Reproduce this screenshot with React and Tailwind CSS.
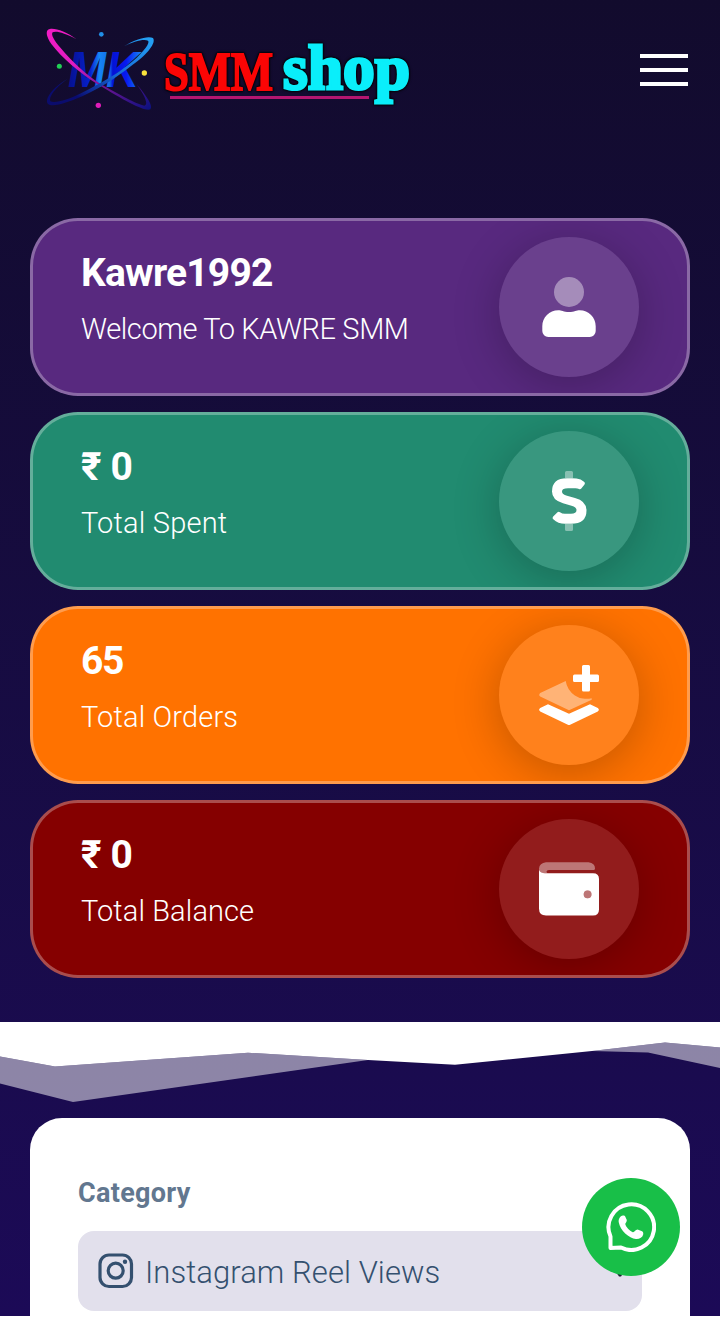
const UserIcon = () => (
  <svg viewBox="0 0 60 60" className="h-[60px] w-[60px]" fill="#fff">
    <circle cx="30" cy="15" r="15" opacity=".4" />
    <path d="M19.300 33.300c3.200 0 5.200 1.700 10.700 1.700s7.500-1.700 10.700-1.700c9 0 16 7 16 16V54a6 6 0 0 1-6 6H9.300a6 6 0 0 1-6-6v-4.700c0-9 7-16 16-16Z" />
  </svg>
);

const DollarIcon = () => (
  <svg viewBox="0 0 60 60" className="h-[60px] w-[60px]">
    <path d="M27.500 0h5A1.500 1.500 0 0 1 34 1.500V7H26V1.500A1.500 1.500 0 0 1 27.500 0ZM26 53h8v5.500a1.500 1.500 0 0 1-1.500 1.500h-5a1.500 1.500 0 0 1-1.500-1.500Z" fill="#fff" opacity=".4" />
    <path d="M37.500 7.500Q42 8 45 10.700Q46.500 12 45.500 13.500L42.300 17.500Q41.300 18.800 40 18Q38.500 17.200 36.500 17.200H29Q23 17.200 23 20.500Q23 23.500 28 24.700L36 27Q47.500 30 47.500 39.500Q47.500 52.800 32 52.800H26Q19 52.800 14.300 48.300Q13 47 14.200 45.500L18.500 41.300Q19.500 40.300 21 41.300Q23 42.800 26 42.800H32Q37.500 42.800 37.500 39Q37.500 36 32.500 34.700L24 32.300Q13 29 13 20.500Q13 7.200 28 7.200H33Q35.500 7.200 37.500 7.500Z" fill="#fff" />
  </svg>
);

const OrdersIcon = () => (
  <svg viewBox="0 0 60 60" className="h-[60px] w-[60px]" fill="#fff">
    <path d="M26.700 16A21 21 0 0 0 52.700 33.200V34.700L30 45.300L1.200 31.500Q-.8 30 1.200 28Z" opacity=".4" />
    <path d="M9 39.300L30 48.800L51 39.300L58.800 43Q61 44.800 58.800 46.500L30 60.300L1.200 46.500Q-1 44.800 1.200 43Z" />
    <path d="M44.500 0h5a1.500 1.500 0 0 1 1.500 1.500V9.500h7.500A1.500 1.500 0 0 1 60 11v4.500a1.500 1.500 0 0 1-1.500 1.500H51v8a1.500 1.500 0 0 1-1.500 1.500h-5A1.500 1.500 0 0 1 43 25V17h-7.500a1.500 1.500 0 0 1-1.500-1.500V11a1.500 1.500 0 0 1 1.500-1.500H43V1.500A1.500 1.500 0 0 1 44.500 0Z" />
  </svg>
);

const WalletIcon = () => (
  <svg viewBox="0 0 60 60" className="h-[60px] w-[60px]" fill="#fff">
    <path d="M7 3.300H49.500Q56 4 56 9.500Q56 11 54.500 11H10Q7.500 11 7.500 12.500Q7.500 14.300 9 14.300H4Q0 13 0 9.500Q.5 4 7 3.300Z" opacity=".4" />
    <path fillRule="evenodd" d="M0 10.500Q1 14.300 6 14.300H54Q60 14.300 60 20V50.500Q60 56.500 54 56.500H7Q0 56.500 0 49.500ZM48.600 31.400a3.900 3.900 0 1 0 0 7.800a3.900 3.900 0 1 0 0-7.800Z" />
    <circle cx="48.600" cy="35.300" r="3.900" opacity=".4" />
  </svg>
);

const Logo = () => (
  <svg viewBox="0 0 400 110" className="h-[110px] w-[400px] shrink-0">
    <defs>
      <linearGradient id="pinkOrbit" x1="0" y1="0" x2="1" y2="1">
        <stop offset="0" stopColor="#f31cc5" />
        <stop offset=".35" stopColor="#e01cc0" />
        <stop offset=".65" stopColor="#6a1491" />
        <stop offset="1" stopColor="#0a1180" />
      </linearGradient>
      <linearGradient id="blueOrbit" x1="1" y1="0" x2="0" y2="1">
        <stop offset="0" stopColor="#25a4f5" />
        <stop offset=".45" stopColor="#1668d8" />
        <stop offset=".8" stopColor="#0a0c70" />
        <stop offset="1" stopColor="#0b0c6c" />
      </linearGradient>
      <linearGradient id="letters" x1="0" y1="0" x2="1" y2="0">
        <stop offset="0" stopColor="#05108d" />
        <stop offset=".3" stopColor="#0620cf" />
        <stop offset=".42" stopColor="#1687f5" />
        <stop offset=".56" stopColor="#1268e8" />
        <stop offset=".6" stopColor="#0412d5" />
        <stop offset=".78" stopColor="#0719f0" />
        <stop offset="1" stopColor="#168cf8" />
      </linearGradient>
    </defs>
    <text x="38" y="72" fontFamily="'Liberation Sans', sans-serif" fontWeight="700" fontStyle="italic" fontSize="50" textLength="71" lengthAdjust="spacingAndGlyphs" fill="url(#letters)">MK</text>
    <g transform="scale(.33333)">
      <path d="M140 73C105 54 78 47 68 52C62 58 72 77 92 99C129 143 173 183 212 207C266 238 322 268 343 272C356 271 347 245 320 208C352 246 370 274 361 283C346 292 285 258 208 211C150 175 94 127 64 87C48 64 45 44 60 42C77 39 110 51 140 73Z" fill="url(#pinkOrbit)" />
      <path d="M282 94C315 72 355 61 369 69C379 83 354 117 308 149C258 189 198 228 135 253C100 267 66 276 54 267C43 251 66 220 112 192C76 218 55 246 61 259C75 266 116 254 153 235C208 208 267 174 308 139C343 108 361 83 354 77C342 71 310 79 282 94Z" fill="url(#blueOrbit)" />
      <circle cx="214" cy="58" r="7" fill="#218fe8" />
      <circle cx="88" cy="154" r="7.500" fill="#21cf55" />
      <circle cx="343" cy="174" r="8" fill="#f8e13c" />
      <circle cx="205" cy="271" r="8" fill="#e01cb9" />
    </g>
    <path d="M140 82.500H339" stroke="#b41670" strokeWidth="3" />
    <g fontFamily="'Liberation Serif', serif" fontWeight="700" strokeLinejoin="miter" className="[filter:drop-shadow(0_0_1px_#000)_drop-shadow(0_0_1px_#000)]">
      <text x="134" y="75" fontSize="55" textLength="109" lengthAdjust="spacingAndGlyphs" fill="#fb0505" stroke="#fb0505" strokeWidth="2">SMM</text>
      <text x="253" y="74" fontSize="64" textLength="127" lengthAdjust="spacingAndGlyphs" fill="#0aeefa" stroke="#0aeefa" strokeWidth="3">shop</text>
    </g>
  </svg>
);

const cards = [
  { title: "Kawre1992", label: "Welcome To KAWRE SMM", bg: "bg-[#58297f]", track: "tracking-[-0.8px]", sub: "tracking-[-0.4px]", Icon: UserIcon },
  { title: "₹ 0", label: "Total Spent", bg: "bg-[#218b70]", track: "tracking-[-0.3px]", sub: "tracking-[0.2px]", Icon: DollarIcon },
  { title: "65", label: "Total Orders", bg: "bg-[#ff7200]", track: "tracking-[-1.3px]", sub: "tracking-[0.15px]", Icon: OrdersIcon },
  { title: "₹ 0", label: "Total Balance", bg: "bg-[#850000]", track: "tracking-[-0.3px]", sub: "tracking-[0.1px]", Icon: WalletIcon },
];

const StatCard = ({ title, label, bg, track, sub, Icon }) => (
  <section className={`flex h-[178px] items-start justify-between overflow-hidden rounded-[48px] border-[3px] border-white/30 pt-4 pr-12 pl-12 ${bg}`}>
    <div className="pt-[13px] text-white">
      <h2 className={`text-[39px] leading-[46px] font-bold whitespace-nowrap ${track}`}>{title}</h2>
      <p className={`mt-[15px] text-[29px] leading-[36px] font-light whitespace-nowrap ${sub}`}>{label}</p>
    </div>
    <div className="flex h-[140px] w-[140px] shrink-0 items-center justify-center rounded-full bg-white/11 shadow-[0_8px_48px_rgba(0,0,0,0.24)]">
      <Icon />
    </div>
  </section>
);

export default function App() {
  return (
    <div className="relative h-[1323px] w-[720px] overflow-hidden bg-white font-['Roboto',sans-serif]">
      <div className="flex h-[1316px] flex-col overflow-hidden bg-linear-to-b from-[#120b2d] to-[#1c0a57]">
        <header className="flex h-[140px] shrink-0 items-center justify-between pr-8 pl-[30px]">
          <Logo />
          <button aria-label="Menu" className="flex w-12 flex-col gap-[10px]">
            <span className="h-1 bg-white" />
            <span className="h-1 bg-white" />
            <span className="h-1 bg-white" />
          </button>
        </header>

        <main className="mt-[78px] flex shrink-0 flex-col gap-4 px-[30px]">
          {cards.map((card, i) => (
            <StatCard key={i} {...card} />
          ))}
        </main>

        <svg viewBox="0 0 720 84" className="mt-[44px] block h-[84px] w-full shrink-0" fill="#fff">
          <path d="M0 0H720V25.500L665 20.500L592 29L455 42.700L368 38L248 30.700L55 44.500L0 34.500Z" />
          <path d="M0 34.500L55 44.500L248 30.700L368 38L73 80L0 61.500Z" opacity=".5" />
          <path d="M592 29L665 20.500L720 25.500V46L648 30.500Z" opacity=".5" />
        </svg>

        <section className="mx-[30px] mt-3 h-[300px] shrink-0 rounded-t-[32px] bg-white px-12 pt-[57px]">
          <div className="text-[27px] leading-[36px] font-bold text-[#62778f]">
            <span className="tracking-[0.3px]">Category</span>
          </div>
          <div className="mt-[20px] flex h-20 items-center rounded-2xl bg-[#e2e0ec] pr-[16px] pl-5 text-[#34506f]">
            <svg viewBox="0 0 36 36" className="h-9 w-9" fill="none" stroke="currentColor" strokeWidth="3.200">
              <rect x="2" y="2" width="31.500" height="31.500" rx="9" />
              <circle cx="17.700" cy="17.700" r="7.500" />
              <circle cx="27" cy="8.700" r="2.200" fill="currentColor" stroke="none" />
            </svg>
            <span className="ml-[11px] pt-[4px] text-[31px] font-light whitespace-nowrap tracking-[0.07px]">Instagram Reel Views</span>
            <svg viewBox="0 0 12 8" className="mt-1 ml-auto h-2 w-3" fill="#17232e">
              <path d="M0 0H12L7 7.500H5Z" />
            </svg>
          </div>
        </section>
      </div>

      <a aria-label="WhatsApp" className="absolute top-[1178px] left-[582px] flex h-[98px] w-[98px] items-center justify-center rounded-full bg-[#18bf48]">
        <svg viewBox="0 0 50 50" className="h-[50px] w-[50px]" fill="none">
          <path d="M4.500 46V34.500A22.800 22.800 0 1 1 15 45.500Z" stroke="#fff" strokeWidth="4" strokeLinejoin="round" />
          <path d="M17 13.500C14 14 12.200 17 12.800 20.500C14 28 23 36.500 30 37C33.500 37.200 36.500 35.500 37.200 32.500C37.500 30.500 37 29.800 35.500 29L31.500 27.500C29.500 27.500 28.500 30.500 26.800 30.200C23.500 29 20 25 19.300 22.300C19.200 21 21 20 20.800 18L19.200 14.500C18.700 13.500 18 13.400 17 13.500Z" fill="#fff" />
        </svg>
      </a>
    </div>
  );
}
